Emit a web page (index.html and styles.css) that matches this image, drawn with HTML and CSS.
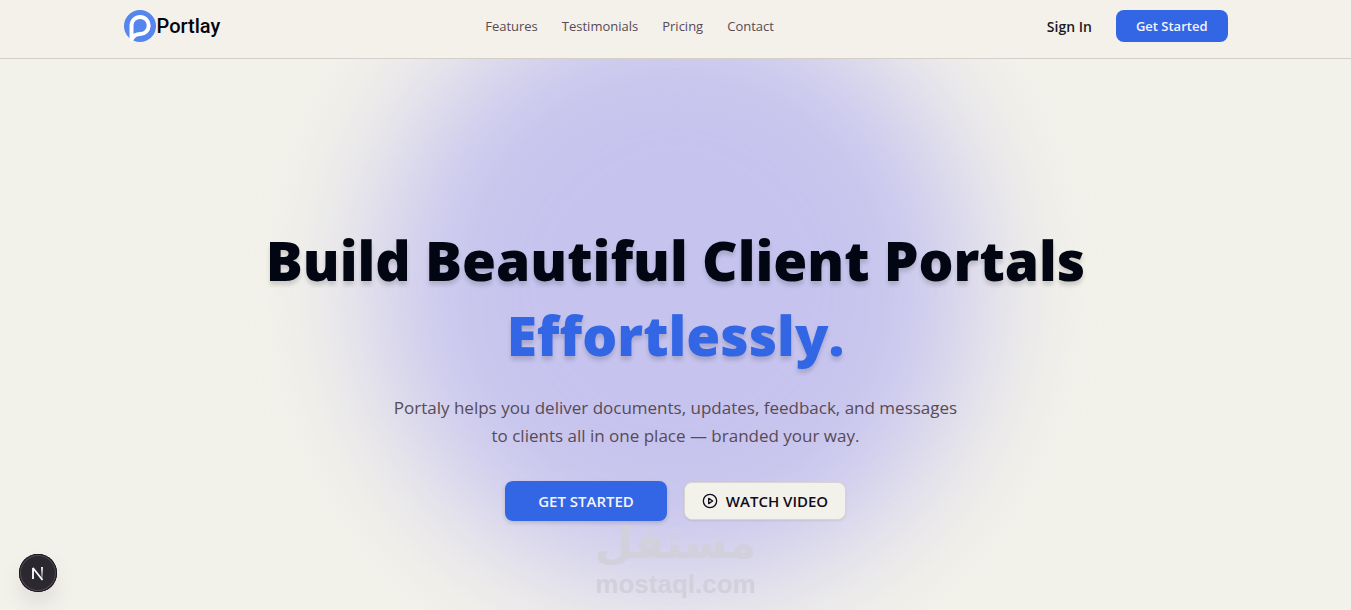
FILE: index.html
```html
<!DOCTYPE html>
<html lang="en">
<head>
  <meta charset="UTF-8">
  <meta name="viewport" content="width=device-width, initial-scale=1">
  <title>Portlay</title>
  <link rel="stylesheet" href="styles.css">
</head>
<body>

  <header class="header">
    <div class="container">
      <a class="logo" href="#">
        <svg width="32" height="32" viewBox="0 0 32 32" fill="none">
          <circle cx="16" cy="16" r="16" fill="#5686ed"/>
          <path d="M7.500 29.500V15.500a8.600 8.600 0 1 1 8.600 8.600c-3.800 0-6.600 1.700-8.600 5.400Z" stroke="#fff" stroke-width="4" stroke-linejoin="round"/>
        </svg>
        <span>Portlay</span>
      </a>
      <nav class="nav">
        <a href="#features">Features</a>
        <a href="#testimonials">Testimonials</a>
        <a href="#pricing">Pricing</a>
        <a href="#contact">Contact</a>
      </nav>
      <div class="actions">
        <a class="sign-in" href="#signin">Sign In</a>
        <button class="btn-small">Get Started</button>
      </div>
    </div>
  </header>

  <main class="hero">
    <div class="glow"></div>
    <div class="hero-content">
      <h1>Build Beautiful Client Portals <span>Effortlessly.</span></h1>
      <p>Portaly helps you deliver documents, updates, feedback, and messages to clients all in one place — branded your way.</p>
      <div class="hero-buttons">
        <button class="btn-primary">GET STARTED</button>
        <button class="btn-outline">
          <svg width="16" height="16" viewBox="0 0 24 24" fill="none" stroke="currentColor" stroke-width="2" stroke-linecap="round" stroke-linejoin="round">
            <circle cx="12" cy="12" r="10"/>
            <path d="M10 8l6 4-6 4Z"/>
          </svg>
          WATCH VIDEO
        </button>
      </div>
    </div>
    <div class="watermark">
      <span class="watermark-ar" lang="ar" dir="rtl">مستقل</span>
      <span class="watermark-en">mostaql.com</span>
    </div>
  </main>

  <button class="dev-badge" aria-label="Open dev tools">
    <svg width="38" height="38" viewBox="0 0 38 38" fill="none">
      <defs>
        <linearGradient id="fade" x1="0" y1="13" x2="0" y2="25" gradientUnits="userSpaceOnUse">
          <stop stop-color="#fff"/>
          <stop offset="1" stop-color="#fff" stop-opacity="0.200"/>
        </linearGradient>
      </defs>
      <path d="M14 25V14l9.500 12" stroke="#fff" stroke-width="1.800" stroke-linejoin="bevel"/>
      <path d="M23 13v11" stroke="url(#fade)" stroke-width="1.800"/>
    </svg>
  </button>

</body>
</html>
```

FILE: styles.css
```css
* {
  box-sizing: border-box;
}

body {
  margin: 0;
  min-height: 100vh;
  display: flex;
  flex-direction: column;
  font-family: "Segoe UI", "Open Sans", sans-serif;
  background-color: #f3f2ea;
  color: #020612;
}

a {
  color: inherit;
  text-decoration: none;
}

button {
  font-family: inherit;
  border: none;
  border-radius: 8px;
  cursor: pointer;
}

.header {
  position: relative;
  z-index: 2;
  padding: 10px 24px 16px;
  background-color: #f4f0ea;
  border-bottom: 1px solid #d4cfc8;
}

.container {
  display: flex;
  justify-content: space-between;
  align-items: center;
  max-width: 1104px;
  margin: 0 auto;
}

.logo {
  display: flex;
  align-items: center;
  gap: 1px;
  font-family: Roboto, sans-serif;
  font-size: 20px;
  font-weight: 500;
}

.nav {
  display: flex;
  gap: 24px;
  font-size: 13px;
  color: #574b55;
}

.actions {
  display: flex;
  align-items: center;
  gap: 24px;
  padding-left: 8px;
}

.sign-in {
  font-size: 14px;
  font-weight: 600;
  color: #1c1824;
}

.btn-small {
  height: 32px;
  padding: 0 20px;
  font-size: 13px;
  font-weight: 600;
  color: #f4f3fb;
  background-color: #3266e5;
}

.hero {
  position: relative;
  flex: 1;
  overflow: hidden;
  padding: 163px 24px 88px;
}

.glow {
  position: absolute;
  top: -72px;
  left: 50%;
  width: 600px;
  height: 600px;
  margin-left: -300px;
  border-radius: 50%;
  background-color: #c6c3ee;
  filter: blur(64px);
}

.hero-content {
  position: relative;
  text-align: center;
}

h1 {
  max-width: 900px;
  margin: 0 auto;
  font-size: 55px;
  font-weight: 800;
  line-height: 75px;
  text-shadow: 0 4px 4px rgba(0, 0, 0, 0.15);
}

h1 span {
  display: block;
  color: #3266e5;
}

.hero-content p {
  max-width: 576px;
  margin: 22px auto 31px;
  font-size: 17px;
  line-height: 28px;
  color: #574b55;
}

.hero-buttons {
  display: flex;
  justify-content: center;
  align-items: center;
  gap: 17px;
}

.btn-primary,
.btn-outline {
  min-width: 162px;
  font-size: 15px;
  font-weight: 600;
}

.btn-primary {
  height: 40px;
  color: #f4f3fb;
  background-color: #3266e5;
  box-shadow: 0 2px 4px rgba(0, 0, 0, 0.15);
}

.btn-outline {
  display: flex;
  justify-content: center;
  align-items: center;
  gap: 8px;
  height: 38px;
  color: #0f0c1c;
  background-color: #f3f2ea;
  border: 1px solid #d9d5d2;
  box-shadow: 0 1px 2px rgba(0, 0, 0, 0.08);
}

.watermark {
  position: absolute;
  bottom: 11px;
  left: 50%;
  transform: translateX(-50%);
  display: flex;
  flex-direction: column;
  align-items: center;
  font-weight: 700;
  color: #d2d0da;
  pointer-events: none;
}

.watermark-ar {
  font-family: "DejaVu Sans", sans-serif;
  font-size: 44px;
  line-height: 52px;
}

.watermark-en {
  font-family: "Liberation Sans", Arial, sans-serif;
  font-size: 26px;
  line-height: 30px;
}

.dev-badge {
  position: fixed;
  bottom: 18px;
  left: 19px;
  z-index: 3;
  width: 38px;
  height: 38px;
  padding: 0;
  border-radius: 50%;
  background-color: #2b2830;
  box-shadow: inset 0 0 0 1px #171420, inset 0 0 0 2px #554b52, 0 12px 20px rgba(80, 70, 110, 0.12);
}

.dev-badge svg {
  display: block;
}
```
